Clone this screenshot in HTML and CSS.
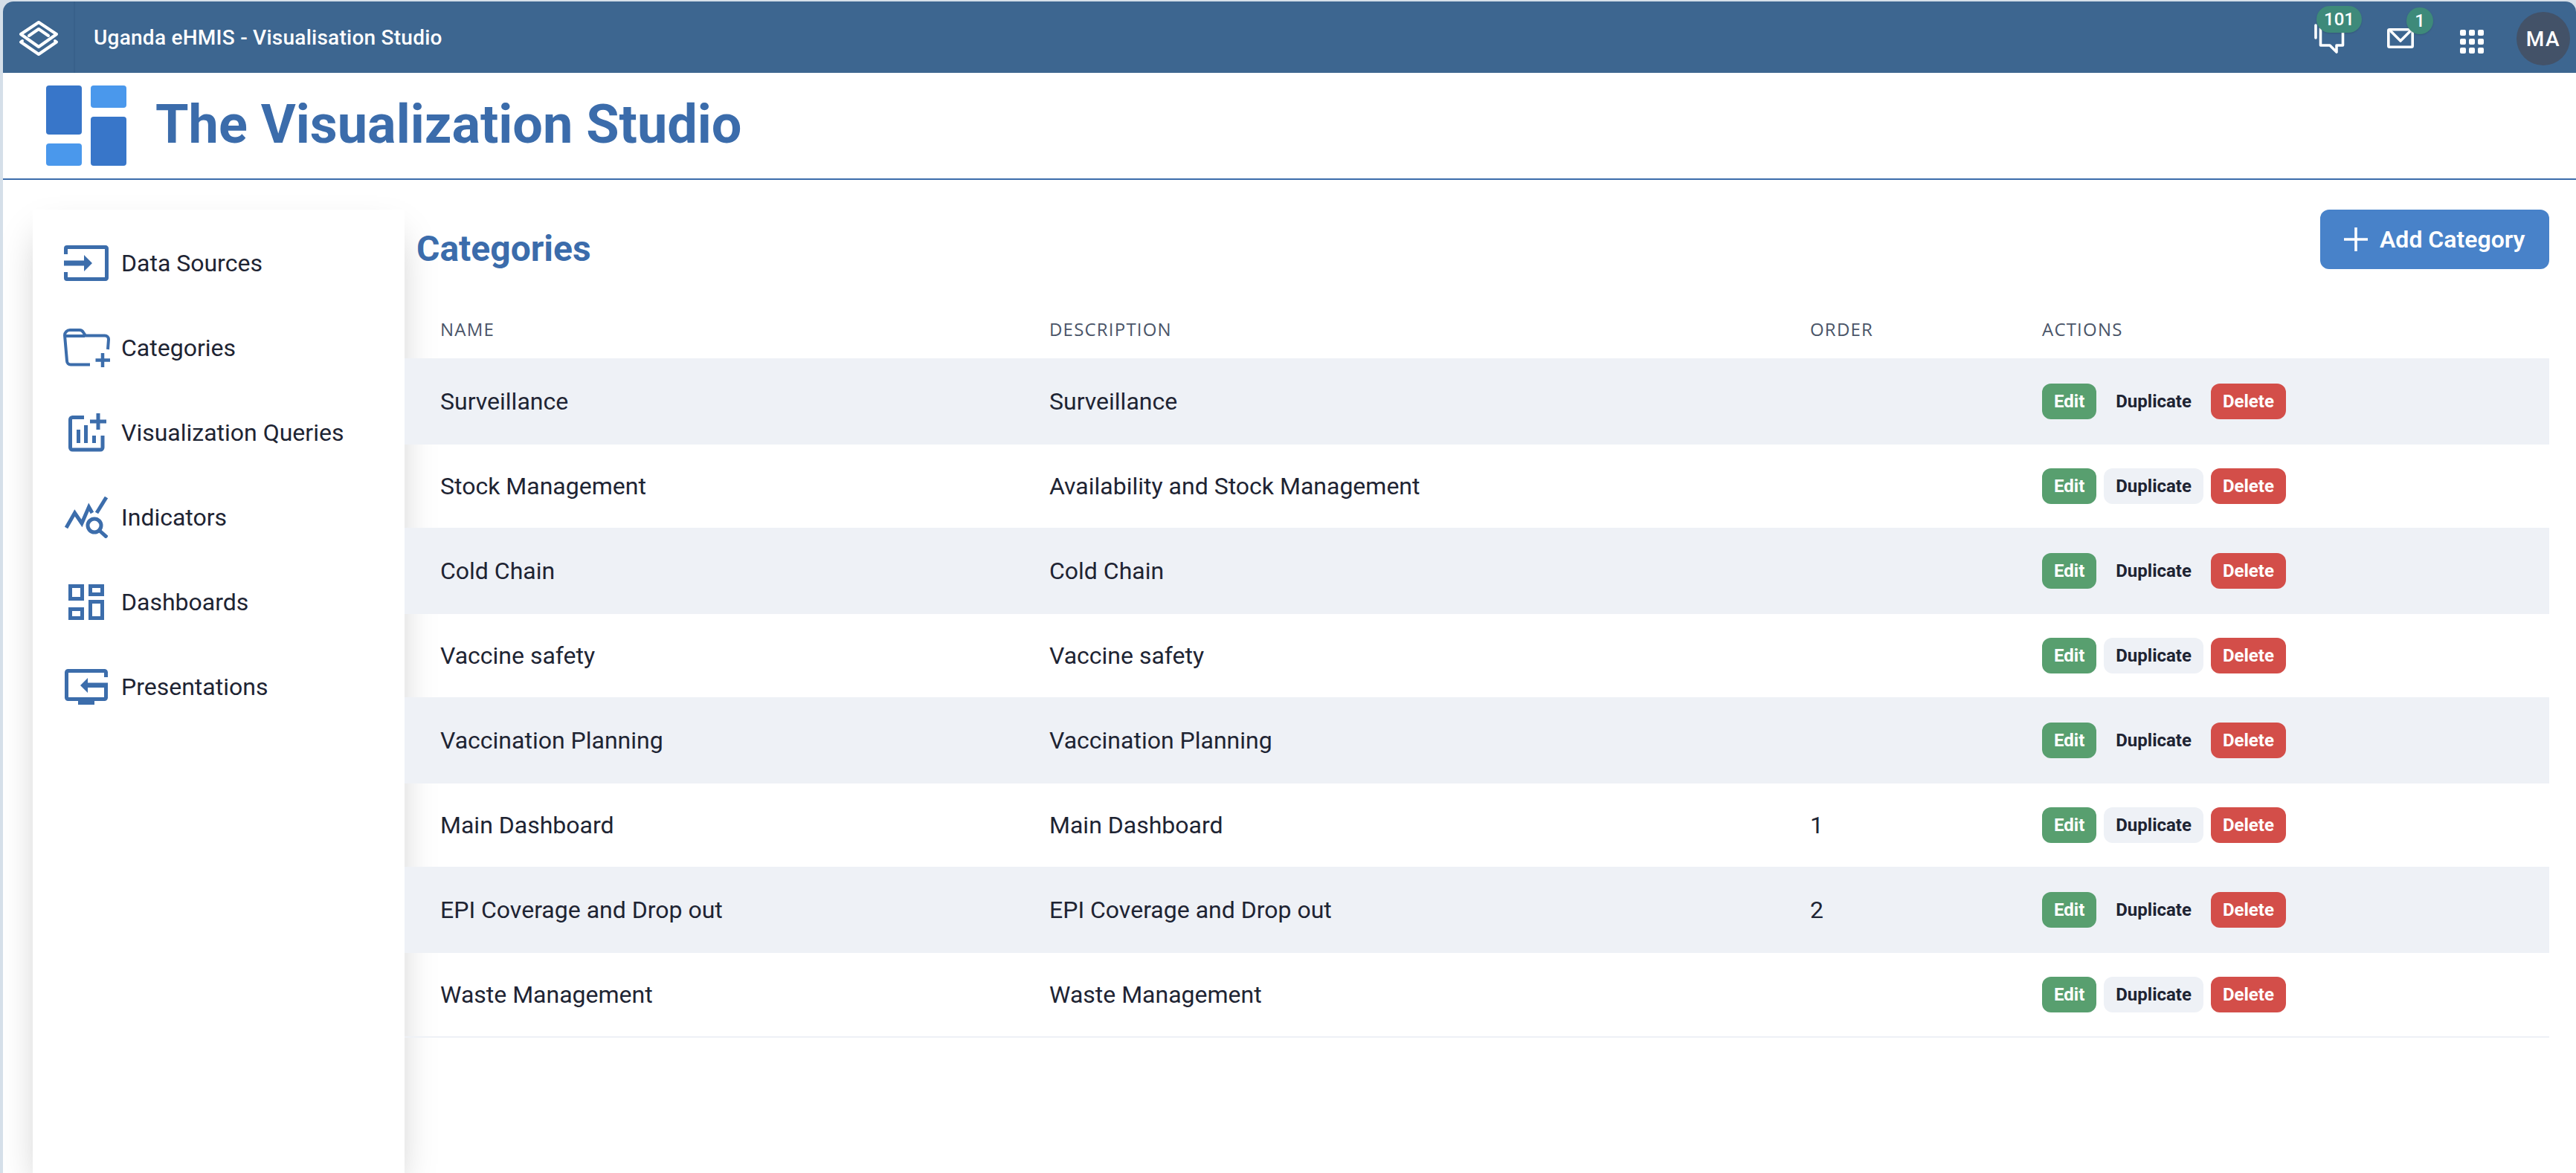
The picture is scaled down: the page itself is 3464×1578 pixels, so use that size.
FILE: index.html
```html
<!DOCTYPE html>
<html lang="en">
<head>
<meta charset="utf-8">
<title>The Visualization Studio</title>
<link rel="stylesheet" href="styles.css">
</head>
<body>
<div class="app">
  <header class="topbar">
    <div class="brand-cell">
      <svg class="brand-mark" viewBox="0 0 54 48" fill="none" stroke="#fff" stroke-width="4" stroke-linejoin="round" stroke-linecap="round">
        <path d="M27 2 51 18 27 35 3 18Z"/>
        <path d="M14 20 27 11 40 20"/>
        <path d="M5 27 3 28.5 27 45 51 28.5 49 27"/>
      </svg>
    </div>
    <div class="app-name">Uganda eHMIS - Visualisation Studio</div>
    <div class="top-actions">
      <div class="top-icon chat">
        <svg viewBox="0 0 42 44" fill="none" stroke="#fff" stroke-width="3.6" stroke-linejoin="round" stroke-linecap="round">
          <path d="M2 4V21"/>
          <path d="M8.5 8V31H21L30 40V31H38.5V8Z"/>
        </svg>
        <span class="badge badge-wide">101</span>
      </div>
      <div class="top-icon mail">
        <svg viewBox="0 0 36 27" fill="none" stroke="#fff" stroke-width="3.6" stroke-linejoin="round" stroke-linecap="round">
          <rect x="1.8" y="1.8" width="32.4" height="23.4" rx="1.5"/>
          <path d="M5 4 18 17 31 4"/>
        </svg>
        <span class="badge">1</span>
      </div>
      <svg class="apps" viewBox="0 0 32 32" fill="#fff">
        <rect width="8" height="8" rx="2"/><rect x="12" width="8" height="8" rx="2"/><rect x="24" width="8" height="8" rx="2"/>
        <rect y="12" width="8" height="8" rx="2"/><rect x="12" y="12" width="8" height="8" rx="2"/><rect x="24" y="12" width="8" height="8" rx="2"/>
        <rect y="24" width="8" height="8" rx="2"/><rect x="12" y="24" width="8" height="8" rx="2"/><rect x="24" y="24" width="8" height="8" rx="2"/>
      </svg>
      <div class="avatar">MA</div>
    </div>
  </header>

  <div class="titlebar">
    <svg class="studio-logo" viewBox="0 0 108 108">
      <rect width="48" height="66" rx="4" fill="#3876c9"/>
      <rect y="78" width="48" height="30" rx="4" fill="#4a98ec"/>
      <rect x="60" width="48" height="30" rx="4" fill="#4a98ec"/>
      <rect x="60" y="42" width="48" height="66" rx="4" fill="#3876c9"/>
    </svg>
    <h1 class="studio-title">The Visualization Studio</h1>
  </div>

  <div class="workspace">
    <nav class="sidebar">
      <a class="nav-item">
        <span class="nav-icon">
          <svg class="ic-source" viewBox="0 0 60 48">
            <path d="M2.5 12V4A1.5 1.5 0 0 1 4 2.5H56A1.5 1.5 0 0 1 57.5 4V44A1.5 1.5 0 0 1 56 45.5H4A1.5 1.5 0 0 1 2.5 44V36" fill="none" stroke="#3c6dab" stroke-width="5"/>
            <path d="M0 20.5H27V13L38 24 27 35V27.5H0Z" fill="#3c6dab"/>
          </svg>
        </span>
        <span>Data Sources</span>
      </a>
      <a class="nav-item">
        <span class="nav-icon">
          <svg class="ic-folder" viewBox="0 0 64 52" fill="none" stroke="#3c6dab" stroke-width="4">
            <path d="M36 48.5H10A5 5 0 0 1 5 43.5L2 9A7 7 0 0 1 9 2H22A6 6 0 0 1 27 5L30 9.500H56A5 5 0 0 1 61 14.500L60 28"/>
            <path d="M2.500 10H29"/>
            <path d="M53 33V52M43.500 42.500H63" stroke-width="4.500"/>
          </svg>
        </span>
        <span>Categories</span>
      </a>
      <a class="nav-item">
        <span class="nav-icon">
          <svg class="ic-query" viewBox="0 0 52 52" fill="none" stroke="#3c6dab" stroke-width="5">
            <path d="M21 5.500H5.500A3 3 0 0 0 2.500 8.500V46A3 3 0 0 0 5.500 49H43A3 3 0 0 0 46 46V30"/>
            <path d="M40 0V22M29 11H51"/>
            <path d="M13.500 22V40M23.500 16V40M34.500 30V40"/>
          </svg>
        </span>
        <span>Visualization Queries</span>
      </a>
      <a class="nav-item">
        <span class="nav-icon">
          <svg class="ic-indicator" viewBox="0 0 58 56" fill="none" stroke="#3c6dab" stroke-width="5">
            <path d="M2 42 13.500 22 23 36 32.500 14 37 22"/>
            <path d="M43 22 56 1"/>
            <circle cx="40" cy="39" r="9"/>
            <path d="M47 46 57 55"/>
          </svg>
        </span>
        <span>Indicators</span>
      </a>
      <a class="nav-item">
        <span class="nav-icon">
          <svg class="ic-dash" viewBox="0 0 48 48" fill="none" stroke="#3c6dab" stroke-width="5">
            <rect x="2.500" y="2.500" width="16" height="17"/>
            <rect x="29.500" y="2.500" width="16" height="11"/>
            <rect x="2.500" y="33.500" width="16" height="12"/>
            <rect x="29.500" y="23.500" width="16" height="22"/>
          </svg>
        </span>
        <span>Dashboards</span>
      </a>
      <a class="nav-item">
        <span class="nav-icon">
          <svg class="ic-present" viewBox="0 0 58 48">
            <path d="M55.500 11V4.500A2 2 0 0 0 53.500 2.500H4.500A2 2 0 0 0 2.500 4.500V38.500A2 2 0 0 0 4.500 40.500H53.500A2 2 0 0 0 55.500 38.500V21" fill="none" stroke="#3c6dab" stroke-width="5"/>
            <path d="M21 22 31 12V18.500H58V25H31V32Z" fill="#3c6dab"/>
            <rect x="18" y="42" width="22" height="6" fill="#3c6dab"/>
          </svg>
        </span>
        <span>Presentations</span>
      </a>
    </nav>

    <main class="content">
      <div class="content-head">
        <h2 class="page-title">Categories</h2>
        <button class="add-btn">
          <svg viewBox="0 0 32 32" fill="none" stroke="#fff" stroke-width="3.600"><path d="M16 0V32M0 16H32"/></svg>
          <span>Add Category</span>
        </button>
      </div>
      <div class="grid-table">
        <div class="row head">
          <div>Name</div><div>Description</div><div>Order</div><div>Actions</div>
        </div>
        <div class="row body-row">
          <div>Surveillance</div><div>Surveillance</div><div></div>
          <div class="actions"><button class="btn edit">Edit</button><button class="btn dup">Duplicate</button><button class="btn del">Delete</button></div>
        </div>
        <div class="row body-row">
          <div>Stock Management</div><div>Availability and Stock Management</div><div></div>
          <div class="actions"><button class="btn edit">Edit</button><button class="btn dup">Duplicate</button><button class="btn del">Delete</button></div>
        </div>
        <div class="row body-row">
          <div>Cold Chain</div><div>Cold Chain</div><div></div>
          <div class="actions"><button class="btn edit">Edit</button><button class="btn dup">Duplicate</button><button class="btn del">Delete</button></div>
        </div>
        <div class="row body-row">
          <div>Vaccine safety</div><div>Vaccine safety</div><div></div>
          <div class="actions"><button class="btn edit">Edit</button><button class="btn dup">Duplicate</button><button class="btn del">Delete</button></div>
        </div>
        <div class="row body-row">
          <div>Vaccination Planning</div><div>Vaccination Planning</div><div></div>
          <div class="actions"><button class="btn edit">Edit</button><button class="btn dup">Duplicate</button><button class="btn del">Delete</button></div>
        </div>
        <div class="row body-row">
          <div>Main Dashboard</div><div>Main Dashboard</div><div>1</div>
          <div class="actions"><button class="btn edit">Edit</button><button class="btn dup">Duplicate</button><button class="btn del">Delete</button></div>
        </div>
        <div class="row body-row">
          <div>EPI Coverage and Drop out</div><div>EPI Coverage and Drop out</div><div>2</div>
          <div class="actions"><button class="btn edit">Edit</button><button class="btn dup">Duplicate</button><button class="btn del">Delete</button></div>
        </div>
        <div class="row body-row last">
          <div>Waste Management</div><div>Waste Management</div><div></div>
          <div class="actions"><button class="btn edit">Edit</button><button class="btn dup">Duplicate</button><button class="btn del">Delete</button></div>
        </div>
      </div>
    </main>
  </div>
</div>
</body>
</html>
```

FILE: styles.css
```css
* { box-sizing: border-box; }
html, body { margin: 0; height: 100%; }
body {
  background: #d5dfe9;
  padding: 2px 0 0 4px;
  font-family: Roboto, "Liberation Sans", sans-serif;
  color: #1e2433;
  overflow: hidden;
}
.app {
  height: 100%;
  background: #fff;
  border-radius: 14px 14px 0 0;
  display: flex;
  flex-direction: column;
  overflow: hidden;
}
.topbar {
  height: 96px;
  flex: none;
  background: #3d6690;
  display: flex;
  align-items: center;
}
.brand-cell {
  width: 97px;
  height: 100%;
  border-right: 2px solid #38608a;
  display: flex;
  justify-content: center;
  align-items: center;
  padding-left: 1px;
}
.brand-mark { width: 54px; height: 48px; margin-top: 4px; }
.app-name {
  margin-left: 25px;
  font-size: 28px;
  font-weight: 500;
  letter-spacing: 0.25px;
  color: #fff;
}
.top-actions {
  margin-left: auto;
  padding-right: 8px;
  display: flex;
  align-items: center;
  height: 100%;
}
.top-icon { position: relative; }
.top-icon svg { display: block; }
.chat svg { width: 42px; height: 44px; }
.chat { margin-top: 4px; margin-right: 56px; }
.mail svg { width: 36px; height: 27px; }
.mail { margin-top: 3px; margin-right: 62px; }
.badge {
  position: absolute;
  height: 36px;
  min-width: 36px;
  border-radius: 18px;
  background: #3e8a7a;
  color: #fff;
  font-size: 24px;
  font-weight: 500;
  line-height: 36px;
  text-align: center;
  box-shadow: 0 1px 2px rgba(0,0,0,.15);
}
.chat .badge { left: 3px; top: -22px; width: 61px; }
.mail .badge { left: 26px; top: -28px; }
.apps { width: 32px; height: 32px; margin-top: 12px; margin-right: 44px; }
.avatar {
  width: 72px;
  height: 72px;
  border-radius: 50%;
  background: #435268;
  color: #fff;
  font-size: 28px;
  font-weight: 500;
  letter-spacing: 1.5px;
  display: flex;
  align-items: center;
  justify-content: center;
  margin-top: 4px;
}
.titlebar {
  height: 144px;
  flex: none;
  border-bottom: 2px solid #3b6cab;
  display: flex;
  align-items: flex-start;
  padding: 17px 0 0 58px;
}
.studio-logo { width: 108px; height: 108px; flex: none; }
.studio-title {
  margin: 11px 0 0 39px;
  font-size: 72px;
  line-height: 84px;
  font-weight: 700;
  color: #3b6cab;
}
.workspace {
  flex: 1;
  display: flex;
  min-height: 0;
  padding-top: 40px;
}
.sidebar {
  width: 500px;
  margin-left: 40px;
  flex: none;
  background: #fff;
  padding-top: 15px;
  box-shadow: 0 25px 50px -12px rgba(0,0,0,.25);
}
.nav-item {
  height: 114px;
  display: flex;
  align-items: center;
  font-size: 32px;
  color: #1e2433;
}
.nav-icon {
  width: 119px;
  height: 64px;
  flex: none;
  display: flex;
  align-items: center;
  padding-left: 37px;
}
.nav-icon svg { display: block; }
.ic-source { width: 60px; height: 48px; margin-left: 5px; }
.ic-folder { width: 64px; height: 52px; margin-left: 4px; }
.ic-query { width: 52px; height: 52px; margin-left: 11px; }
.ic-indicator { width: 58px; height: 56px; margin-left: 6px; }
.ic-dash { width: 48px; height: 48px; margin-left: 11px; }
.ic-present { width: 58px; height: 48px; margin-left: 6px; }
.content {
  flex: 1;
  min-width: 0;
  padding-right: 36px;
}
.content-head {
  height: 80px;
  display: flex;
  justify-content: space-between;
  align-items: flex-start;
  margin-bottom: 40px;
}
.page-title {
  margin: 25px 0 0 16px;
  font-size: 48px;
  line-height: 56px;
  font-weight: 700;
  color: #3b6cab;
}
.add-btn {
  width: 308px;
  height: 80px;
  border: 0;
  border-radius: 12px;
  background: #4882c9;
  color: #fff;
  font: 600 32px Roboto, sans-serif;
  display: flex;
  align-items: center;
  padding: 0 0 0 32px;
  gap: 16px;
}
.add-btn svg { width: 32px; height: 32px; }
.row {
  display: grid;
  grid-template-columns: 819px 1023px 312px 1fr;
  align-items: center;
}
.row > div { padding-left: 48px; }
.head {
  height: 80px;
  font-family: "Open Sans", "Noto Sans", sans-serif;
  font-size: 24px;
  font-weight: 500;
  letter-spacing: 1.2px;
  text-transform: uppercase;
  color: #4a5568;
}
.body-row {
  height: 112px;
  font-size: 32px;
}
.body-row:nth-child(even) { height: 116px; background: #eef1f6; }
.body-row.last { height: 114px; border-bottom: 2px solid #eef1f6; }
.actions { display: flex; gap: 10px; }
.btn {
  height: 48px;
  border: 0;
  border-radius: 12px;
  padding: 0 16px;
  font: 700 24px Roboto, sans-serif;
}
.edit { background: #589f6f; color: #fff; }
.dup { background: #eef1f6; color: #1e2433; }
.del { background: #d34e49; color: #fff; }
```
